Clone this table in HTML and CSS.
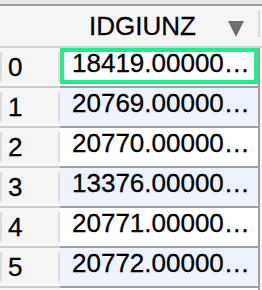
FILE: index.html
```html
<!DOCTYPE html>
<html>
<head>
<meta charset="utf-8">
<link rel="stylesheet" href="styles.css">
</head>
<body>
<div class="grid">
  <div class="topbar"></div>
  <div class="header">
    <div class="hidx"></div>
    <div class="hcol">
      <span class="htext">IDGIUNZ</span>
      <svg class="arrow" width="16" height="17" viewBox="0 0 16 17"><polygon points="0,1 16,1 8,17" fill="#6f6f6f"/></svg>
    </div>
    <div class="hsep"></div>
  </div>
  <div class="row">
    <div class="idx"><div class="lbl">0</div></div>
    <div class="cell sel">18419.000000000000</div>
  </div>
  <div class="row alt">
    <div class="idx"><div class="lbl">1</div></div>
    <div class="cell">20769.000000000000</div>
  </div>
  <div class="row">
    <div class="idx"><div class="lbl">2</div></div>
    <div class="cell">20770.000000000000</div>
  </div>
  <div class="row alt">
    <div class="idx"><div class="lbl">3</div></div>
    <div class="cell">13376.000000000000</div>
  </div>
  <div class="row">
    <div class="idx"><div class="lbl">4</div></div>
    <div class="cell">20771.000000000000</div>
  </div>
  <div class="row alt">
    <div class="idx"><div class="lbl">5</div></div>
    <div class="cell">20772.000000000000</div>
  </div>
  <div class="row">
    <div class="idx"><div class="lbl">6</div></div>
    <div class="cell">20773.000000000000</div>
  </div>
</div>
</body>
</html>
```
FILE: styles.css
```css
html, body {
  margin: 0;
  padding: 0;
  height: 100%;
  overflow: hidden;
  background: #f5f5f5;
}
.grid {
  font-family: "Liberation Sans", Arial, sans-serif;
  color: #000;
  width: 262px;
  -webkit-text-stroke: 0.3px #000;
}
.topbar {
  height: 4px;
  background: #e8e8e8;
  border-bottom: 2px solid #9a9a9a;
}
.header {
  display: flex;
  height: 40px;
  background: #f5f5f5;
  border-bottom: 2px solid #cfcfcf;
}
.hidx {
  width: 60px;
}
.hcol {
  width: 198px;
  display: flex;
  align-items: center;
  box-sizing: border-box;
  padding-left: 29px;
}
.htext {
  font-size: 26px;
  line-height: 30px;
}
.arrow {
  margin-left: 32px;
  margin-top: 5px;
}
.hsep {
  width: 2px;
  height: 27px;
  margin-top: 4px;
  background: #dcdcdc;
}
.row {
  display: flex;
  height: 40px;
}
.idx {
  width: 60px;
  box-sizing: border-box;
  background: #f5f5f5;
  border-bottom: 2px solid #cccccc;
  padding: 4px 0;
}
.lbl {
  height: 30px;
  box-sizing: border-box;
  border-left: 2px solid #dcdcdc;
  border-right: 2px solid #dcdcdc;
  padding-left: 6px;
  font-size: 26px;
  line-height: 30px;
}
.cell {
  position: relative;
  width: 200px;
  box-sizing: border-box;
  background: #ffffff;
  border-right: 2px solid #a0a0a0;
  border-bottom: 2px solid #a0a0a0;
  padding: 1px 7px 0 12px;
  font-size: 26px;
  line-height: 28px;
  white-space: nowrap;
  overflow: hidden;
  text-overflow: ellipsis;
}
.alt .cell {
  background: #edf2fc;
}
.sel::after {
  content: "";
  position: absolute;
  left: 0;
  top: 0;
  right: 0;
  bottom: 2px;
  border: 4px solid #1df08a;
}
```
